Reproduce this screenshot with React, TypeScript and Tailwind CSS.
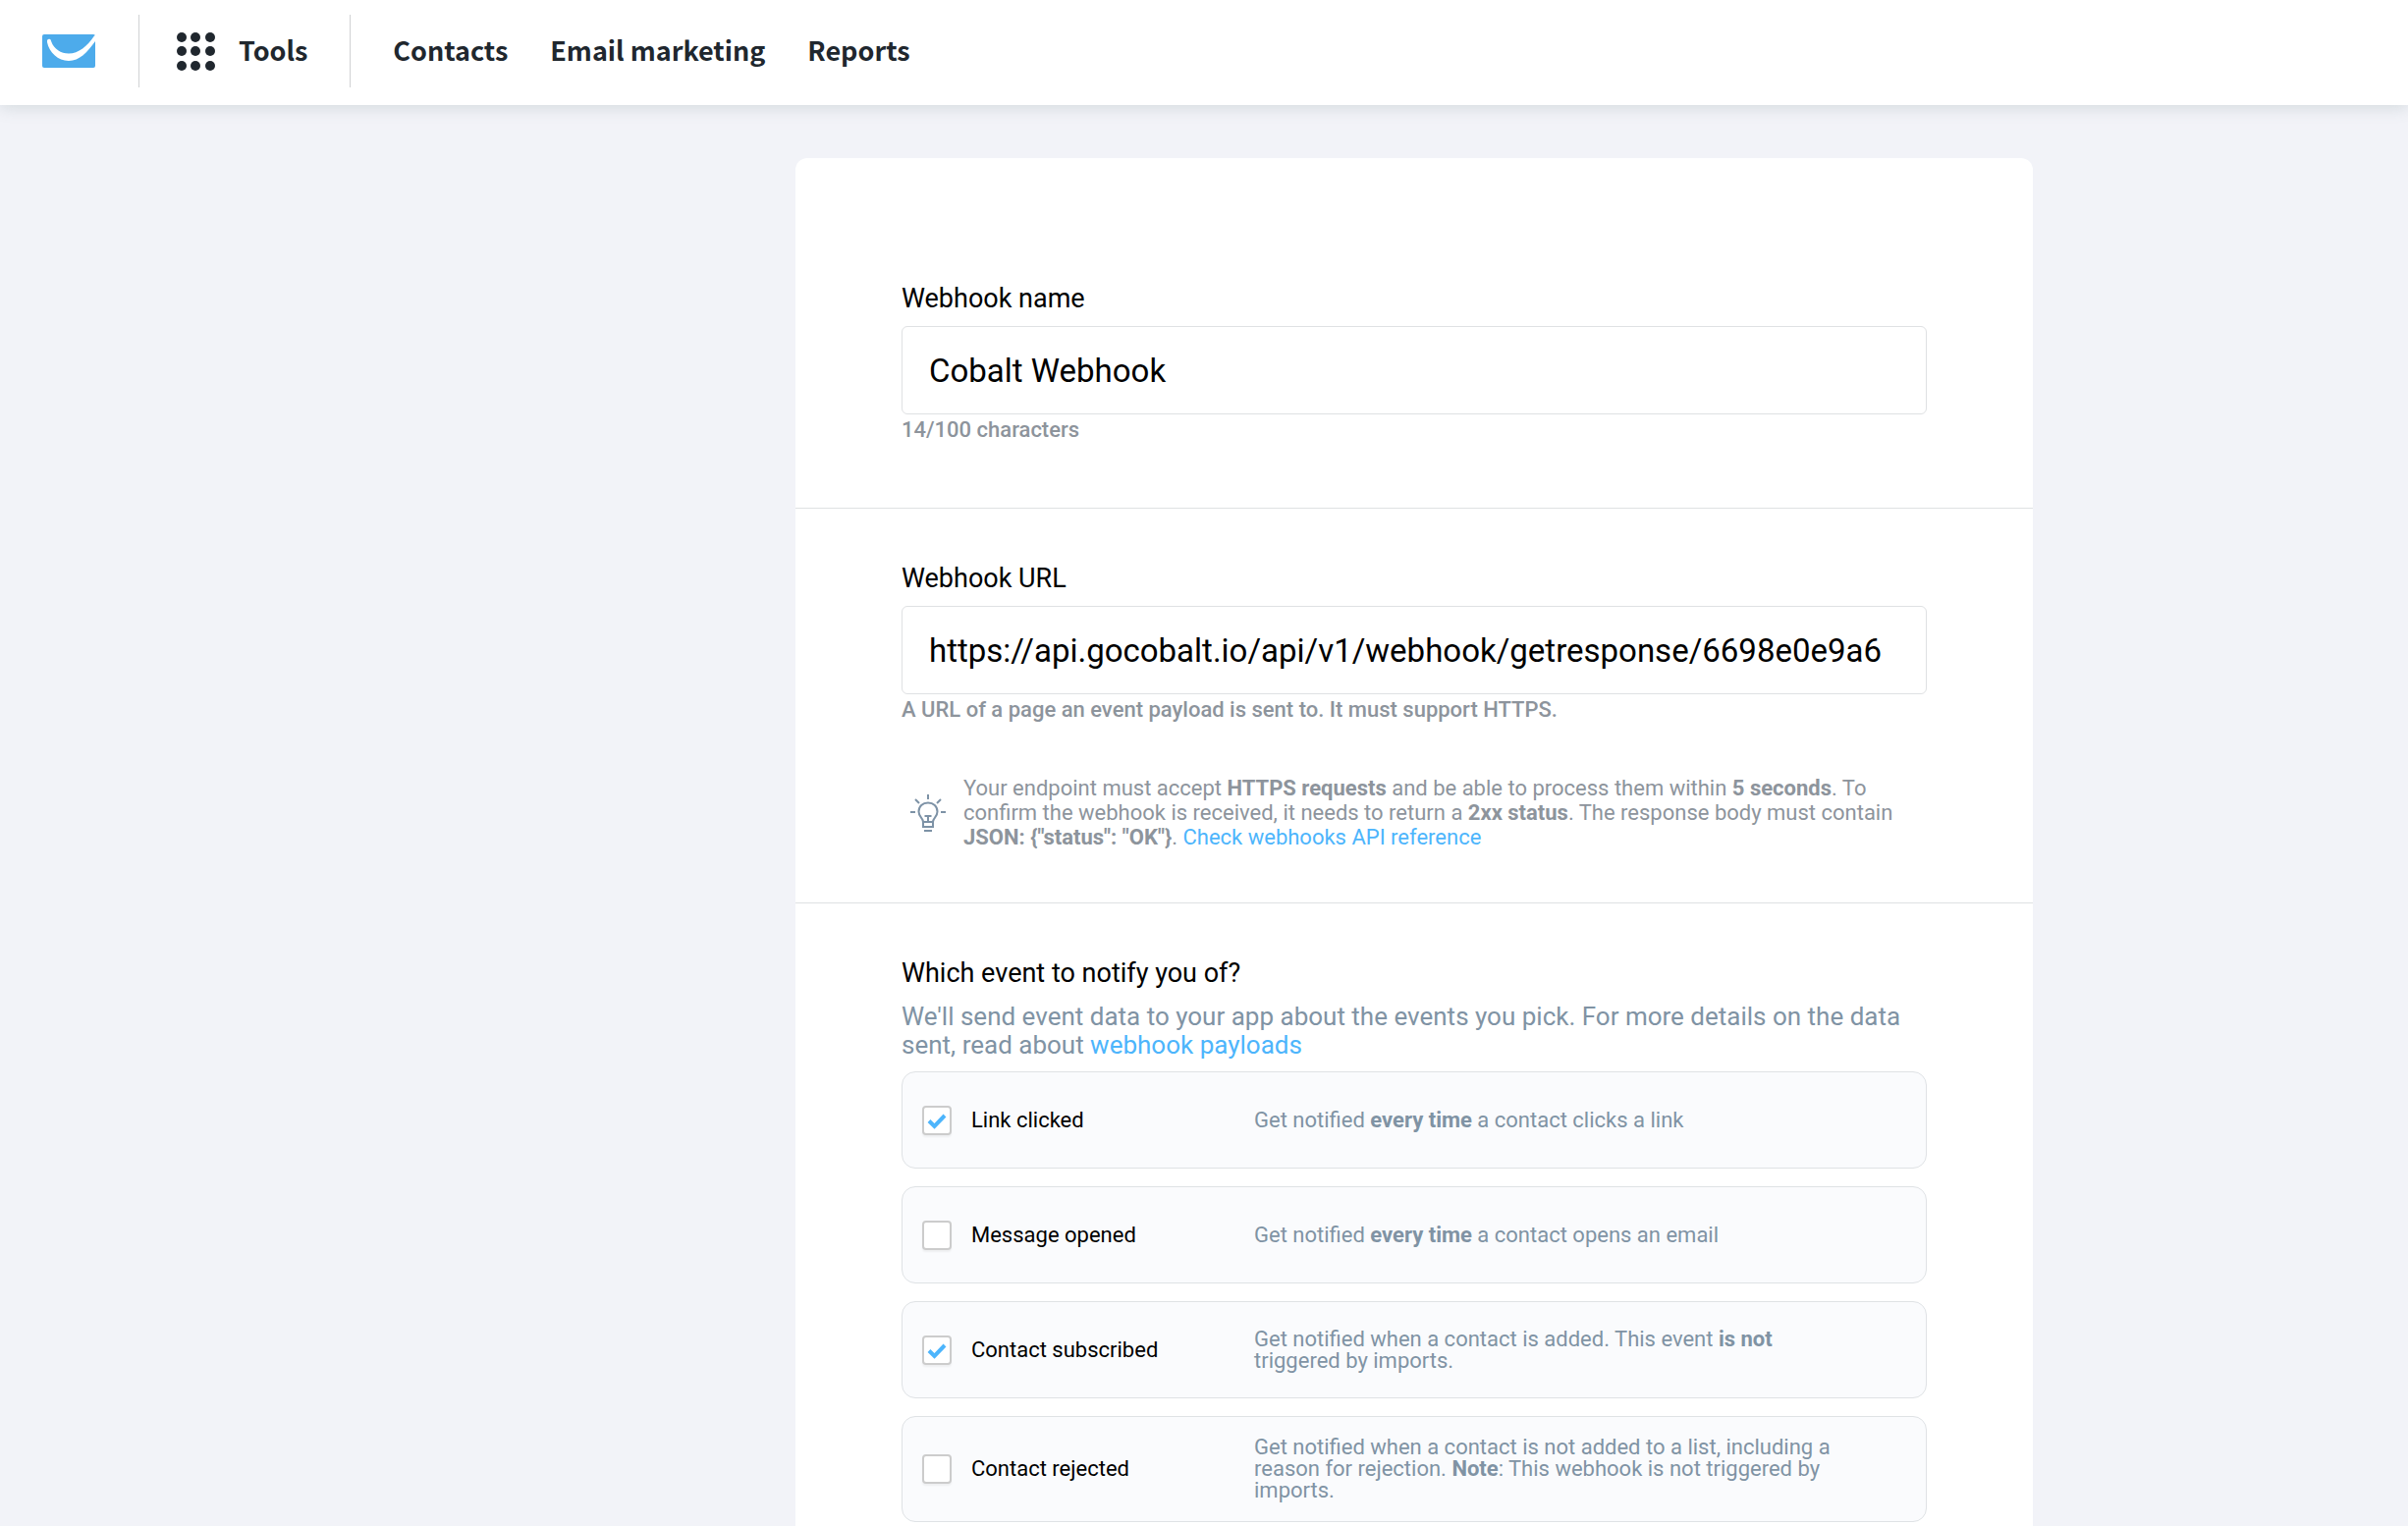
import React, { useState } from "react";

type EventOption = {
  id: string;
  label: string;
  checked: boolean;
  description: React.ReactNode;
};

const eventOptions: EventOption[] = [
  {
    id: "link-clicked",
    label: "Link clicked",
    checked: true,
    description: (
      <>
        Get notified <b className="font-bold">every time</b> a contact clicks a link
      </>
    ),
  },
  {
    id: "message-opened",
    label: "Message opened",
    checked: false,
    description: (
      <>
        Get notified <b className="font-bold">every time</b> a contact opens an email
      </>
    ),
  },
  {
    id: "contact-subscribed",
    label: "Contact subscribed",
    checked: true,
    description: (
      <>
        Get notified when a contact is added. This event <b className="font-bold">is not</b>
        <br />
        triggered by imports.
      </>
    ),
  },
  {
    id: "contact-rejected",
    label: "Contact rejected",
    checked: false,
    description: (
      <>
        Get notified when a contact is not added to a list, including a
        <br />
        reason for rejection. <b className="font-bold">Note</b>: This webhook is not triggered by
        <br />
        imports.
      </>
    ),
  },
];

function Logo() {
  return (
    <svg width="54" height="34" viewBox="0 0 54 34" aria-hidden="true">
      <rect width="54" height="34" rx="2" fill="#4dabeb" />
      <path
        d="M54 1V7C46 18 38 27 27 27C16 27 7 18 5 8C4.600 5.500 6 4.600 7.200 4.800C8.600 5 8.800 6 9.300 7.500C12 15 19 19.500 27 19.500C37 19.500 46 12 53 1.500Z"
        fill="#fff"
      />
    </svg>
  );
}

function GridDots() {
  const positions = [5, 19, 34];
  return (
    <svg width="39" height="39" viewBox="0 0 39 39" fill="#20272e" aria-hidden="true">
      {positions.map((y) => positions.map((x) => <circle key={`${x}-${y}`} cx={x} cy={y} r="5" />))}
    </svg>
  );
}

function Bulb() {
  return (
    <svg
      width="36"
      height="38"
      viewBox="0 0 36 38"
      fill="none"
      stroke="#7d92a6"
      strokeWidth="2"
      aria-hidden="true"
      className="shrink-0"
    >
      <path d="M18 0V5M5 5L9 9M31 5L27 9M0 18H5M31 18H36" />
      <path d="M13 28C13 24 8.500 23 8.500 17.500C8.500 12 12.500 8.500 18 8.500S27.500 12 27.500 17.500C27.500 23 23 24 23 28V33H13Z" />
      <path d="M13 28H23M14 37H22M14.500 22H21.500M18 22V28" />
    </svg>
  );
}

function Divider() {
  return <div className="h-[74px] w-px bg-[#d0d2d4]" />;
}

function Field({ id, label, value, hint }: { id: string; label: string; value: string; hint: string }) {
  return (
    <div>
      <label htmlFor={id} className="block text-[27px] leading-8 text-black">
        {label}
      </label>
      <input
        id={id}
        type="text"
        defaultValue={value}
        aria-describedby={`${id}-hint`}
        className="mt-3 block h-[90px] w-full rounded-md border border-[#dfe1e3] bg-white px-[27px] text-[33px] text-black outline-none"
      />
      <p id={`${id}-hint`} className="mt-[3px] text-[22px] leading-[26px] font-medium text-[#8d949c]">
        {hint}
      </p>
    </div>
  );
}

function EventRow({ option }: { option: EventOption }) {
  const [checked, setChecked] = useState(option.checked);
  return (
    <li className="flex min-h-[99px] items-center rounded-[14px] border border-[#dfe2e5] bg-[#fafbfd] py-5 pr-12 pl-5">
      <div className="flex w-[338px] shrink-0 items-center">
        <span className="relative flex size-[30px] shrink-0">
          <input
            id={option.id}
            type="checkbox"
            checked={checked}
            onChange={(e) => setChecked(e.target.checked)}
            className="size-[30px] appearance-none rounded-[4px] border-2 border-[#cccccc] bg-white shadow-[0_2px_2px_rgba(0,0,0,0.05)]"
          />
          {checked && (
            <svg
              viewBox="0 0 30 30"
              className="pointer-events-none absolute inset-0 size-full"
              fill="none"
              stroke="#4db5fc"
              strokeWidth="4"
              aria-hidden="true"
            >
              <path d="M7 15.500L12.500 21L23 10" />
            </svg>
          )}
        </span>
        <label htmlFor={option.id} className="pl-5 text-[22px] leading-[22px] text-black">
          {option.label}
        </label>
      </div>
      <p className="text-[22px] leading-[22px] text-[#8093a4]">{option.description}</p>
    </li>
  );
}

export default function App() {
  return (
    <div className="min-h-screen bg-[#f2f3f8] font-['Roboto',sans-serif]">
      <header className="relative flex h-[107px] items-center bg-white pb-[3px] pl-[43px] font-['Noto_Sans_CJK_SC',sans-serif] text-[27px] leading-8 font-bold text-[#20272e] shadow-[0_2px_16px_rgba(80,110,110,0.2)]">
        <a href="#home" aria-label="Home" className="mr-[44px]">
          <Logo />
        </a>
        <Divider />
        <button type="button" className="mr-[43px] ml-[38px] flex items-center gap-6">
          <GridDots />
          <span className="pb-[2px]">Tools</span>
        </button>
        <Divider />
        <nav className="ml-[43px] flex gap-[43px] pb-[2px]">
          <a href="#contacts">Contacts</a>
          <a href="#email-marketing">Email marketing</a>
          <a href="#reports">Reports</a>
        </nav>
      </header>

      <main className="grid grid-cols-[810fr_1260fr_382fr] pt-[54px]">
        <form className="col-start-2 rounded-t-xl bg-white">
          <section className="border-b border-[#dfe1e3] px-[108px] pt-[127px] pb-[66px]">
            <Field id="webhook-name" label="Webhook name" value="Cobalt Webhook" hint="14/100 characters" />
          </section>

          <section className="border-b border-[#dfe1e3] px-[108px] pt-[55px] pb-[54px]">
            <Field
              id="webhook-url"
              label="Webhook URL"
              value="https://api.gocobalt.io/api/v1/webhook/getresponse/6698e0e9a6"
              hint="A URL of a page an event payload is sent to. It must support HTTPS."
            />
            <div className="mt-[54px] flex items-center gap-[18px] pl-[9px]">
              <Bulb />
              <p className="text-[22px] leading-[25px] text-[#8d949c]">
                Your endpoint must accept <b className="font-bold">HTTPS requests</b> and be able to process them
                within <b className="font-bold">5 seconds</b>. To
                <br />
                confirm the webhook is received, it needs to return a <b className="font-bold">2xx status</b>. The
                response body must contain
                <br />
                <b className="font-bold">JSON: {'{"status": "OK"}'}</b>.{" "}
                <a href="#api-reference" className="text-[#4db5fc]">
                  Check webhooks API reference
                </a>
              </p>
            </div>
          </section>

          <section className="px-[108px] pt-[55px] pb-16">
            <h2 className="text-[27px] leading-8 text-black">Which event to notify you of?</h2>
            <p className="mt-[14px] text-[26px] leading-[29px] text-[#8093a4]">
              We'll send event data to your app about the events you pick. For more details on the data
              <br />
              sent, read about{" "}
              <a href="#webhook-payloads" className="text-[#4db5fc]">
                webhook payloads
              </a>
            </p>
            <ul className="mt-3 flex flex-col gap-[18px]">
              {eventOptions.map((option) => (
                <EventRow key={option.id} option={option} />
              ))}
            </ul>
          </section>
        </form>
      </main>
    </div>
  );
}
